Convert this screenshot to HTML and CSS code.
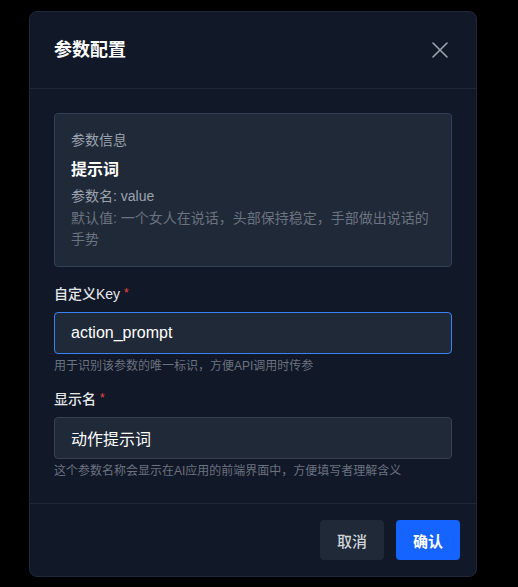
FILE: index.html
```html
<!DOCTYPE html>
<html lang="zh-CN">
<head>
<meta charset="utf-8">
<title>参数配置</title>
<link rel="stylesheet" href="styles.css">
</head>
<body>
<div class="dialog">
  <div class="dialog-header">
    <h2 class="dialog-title">参数配置</h2>
    <button class="close-btn" aria-label="关闭">
      <svg width="24" height="24" viewBox="0 0 24 24"><path d="M5 5L19 19M19 5L5 19" stroke="#9ca3af" stroke-width="1.6" stroke-linecap="round" fill="none"/></svg>
    </button>
  </div>
  <div class="dialog-body">
    <div class="info-box">
      <div class="info-caption">参数信息</div>
      <div class="info-title">提示词</div>
      <div class="info-name">参数名: value</div>
      <div class="info-default">默认值: 一个女人在说话，头部保持稳定，手部做出说话的手势</div>
    </div>
    <div class="field">
      <label class="field-label">自定义Key <span class="req">*</span></label>
      <div class="input input-focus">action_prompt</div>
      <div class="hint">用于识别该参数的唯一标识，方便API调用时传参</div>
    </div>
    <div class="field field-second">
      <label class="field-label">显示名 <span class="req">*</span></label>
      <div class="input">动作提示词</div>
      <div class="hint">这个参数名称会显示在AI应用的前端界面中，方便填写者理解含义</div>
    </div>
  </div>
  <div class="dialog-footer">
    <button class="btn btn-cancel">取消</button>
    <button class="btn btn-primary">确认</button>
  </div>
</div>
</body>
</html>
```
FILE: styles.css
```css
* { box-sizing: border-box; }
html, body { margin: 0; padding: 0; }
body {
  background: #000;
  width: 518px;
  height: 587px;
  padding: 11px 0 0 29px;
  font-family: "Liberation Sans", "Noto Sans CJK SC", sans-serif;
  color: #f3f4f6;
}
.dialog {
  width: 448px;
  background: #111827;
  border: 1px solid #1f2937;
  border-radius: 8px;
  overflow: hidden;
}
.dialog-header {
  display: flex;
  align-items: center;
  justify-content: space-between;
  padding: 24px 24px;
  border-bottom: 1px solid #1f2937;
}
.dialog-title {
  margin: 0;
  font-size: 18px;
  line-height: 28px;
  font-weight: 700;
  color: #ffffff;
}
.close-btn {
  width: 24px;
  height: 24px;
  padding: 0;
  border: 0;
  background: transparent;
  display: flex;
}
.dialog-body {
  padding: 24px 24px 24px;
}
.info-box {
  background: #1f2937;
  border: 1px solid #334155;
  border-radius: 4px;
  padding: 16px 16px 16px;
}
.info-caption {
  font-size: 14px;
  line-height: 20px;
  color: #9ca3af;
}
.info-title {
  margin-top: 8px;
  font-size: 16px;
  line-height: 24px;
  font-weight: 700;
  color: #ffffff;
}
.info-name {
  margin-top: 4px;
  font-size: 14px;
  line-height: 20px;
  color: #9ca3af;
}
.info-default {
  margin-top: 2px;
  font-size: 14px;
  line-height: 21px;
  color: #6b7280;
}
.field { margin-top: 17px; }
.field-second { margin-top: 15px; }
.field-label {
  display: block;
  font-size: 14px;
  line-height: 20px;
  font-weight: 500;
  color: #e5e7eb;
  margin-bottom: 8px;
}
.req {
  color: #ef4444;
  font-size: 12px;
  vertical-align: top;
  position: relative;
  top: -1px;
}
.input {
  height: 42px;
  background: #1f2937;
  border: 1px solid #374151;
  border-radius: 4px;
  padding: 0 16px;
  display: flex;
  align-items: center;
  font-size: 16px;
  color: #ffffff;
}
.input-focus {
  border-color: #3b82f6;
}
.hint {
  margin-top: 4px;
  font-size: 12px;
  line-height: 16px;
  color: #6b7280;
}
.dialog-footer {
  display: flex;
  justify-content: flex-end;
  gap: 12px;
  padding: 16px 16px;
  border-top: 1px solid #1f2937;
}
.btn {
  width: 64px;
  height: 40px;
  border: 0;
  border-radius: 4px;
  font-family: "Liberation Sans", "Noto Sans CJK SC", sans-serif;
  font-size: 15px;
  font-weight: 700;
}
.btn-cancel {
  background: #1f2937;
  color: #d1d5db;
  font-weight: 500;
}
.btn-primary {
  background: #1664ff;
  color: #ffffff;
}
```
